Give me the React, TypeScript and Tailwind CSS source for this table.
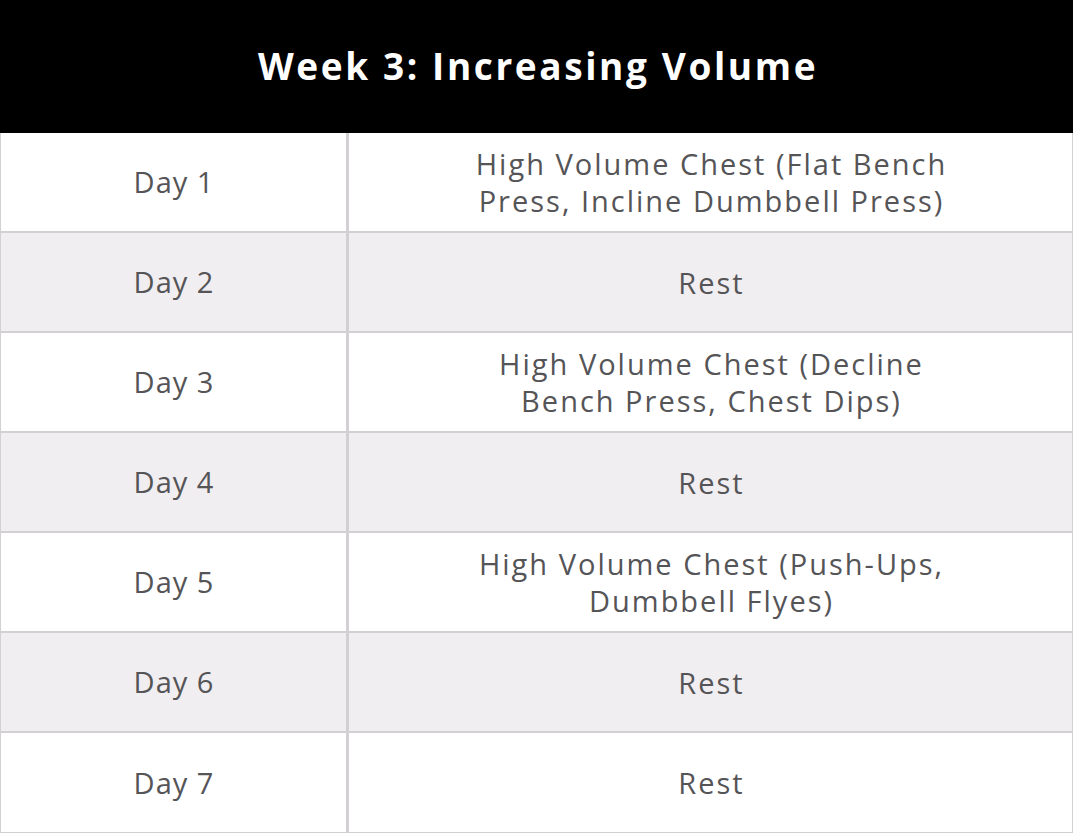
const rows: { day: string; plan: string[] }[] = [
  { day: "Day 1", plan: ["High Volume Chest (Flat Bench", "Press, Incline Dumbbell Press)"] },
  { day: "Day 2", plan: ["Rest"] },
  { day: "Day 3", plan: ["High Volume Chest (Decline", "Bench Press, Chest Dips)"] },
  { day: "Day 4", plan: ["Rest"] },
  { day: "Day 5", plan: ["High Volume Chest (Push-Ups,", "Dumbbell Flyes)"] },
  { day: "Day 6", plan: ["Rest"] },
  { day: "Day 7", plan: ["Rest"] },
];

export default function App() {
  return (
    <div className="w-[1073px] h-[833px] bg-white font-['Open_Sans',sans-serif]">
      <div className="h-[133px] bg-black flex items-center justify-center">
        <h1 className="text-white text-[37px] font-bold tracking-[2.6px] -mt-[2px] pl-[3px]">
          Week 3: Increasing Volume
        </h1>
      </div>
      <div className="border-x border-b border-[#d2d0d2]">
        {rows.map((row, i) => (
          <div
            key={row.day}
            className={`flex text-[#555457] text-[29px] ${
              i < rows.length - 1 ? "h-[100px] border-b-2 border-[#d2d0d2]" : "h-[99px]"
            } ${i % 2 === 1 ? "bg-[#f0eef0]" : "bg-white"}`}
          >
            <div className="w-[348px] shrink-0 flex items-center justify-center border-r-[3px] border-[#d2d0d2] tracking-[1px] pl-[1px]">
              {row.day}
            </div>
            <div className="flex-1 flex flex-col items-center justify-center leading-[37px] text-center tracking-[2px] pl-[2px]">
              {row.plan.map((line) => (
                <span key={line}>{line}</span>
              ))}
            </div>
          </div>
        ))}
      </div>
    </div>
  );
}
